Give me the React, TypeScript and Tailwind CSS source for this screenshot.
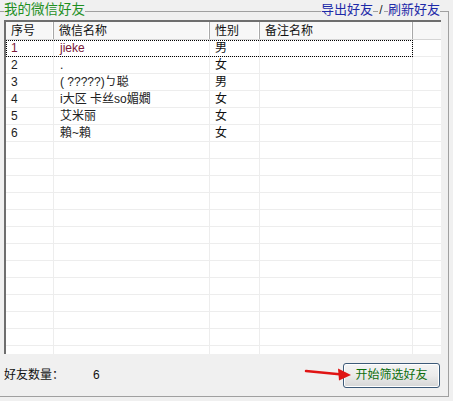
const font = '"Liberation Sans", "Noto Sans CJK SC", sans-serif'

interface Friend {
  no: string
  name: string
  sex: string
  remark: string
}

const friends: Friend[] = [
  { no: '1', name: 'jieke', sex: '男', remark: '' },
  { no: '2', name: '.', sex: '女', remark: '' },
  { no: '3', name: '( ?????)ㄅ聪', sex: '男', remark: '' },
  { no: '4', name: 'i大区 卡丝so媚嫺', sex: '女', remark: '' },
  { no: '5', name: '艾米丽', sex: '女', remark: '' },
  { no: '6', name: '賴~賴', sex: '女', remark: '' },
]

// empty rows to fill the list below the data
const blanks = Array.from({ length: 14 }, (_, i) => i)

function Row({ f, focused }: { f?: Friend; focused?: boolean }) {
  const color = focused ? 'text-[#7a1838]' : 'text-[#222]'
  return (
    <div className={`flex h-[17px] shrink-0 border-b border-[#ededed] text-[12px] leading-[16px] ${color}`}>
      <div className="relative flex">
        <div className="w-[48px] border-r border-[#ededed] pl-[5px] whitespace-nowrap">{f?.no}</div>
        <div className="w-[156px] border-r border-[#ededed] pl-[6px] whitespace-nowrap overflow-hidden">{f?.name}</div>
        <div className="w-[50px] border-r border-[#ededed] pl-[5px] text-[#111] whitespace-nowrap">{f?.sex}</div>
        <div className="w-[153px] border-r border-[#ededed] pl-[5px] whitespace-nowrap">{f?.remark}</div>
        {focused && (
          <div className="pointer-events-none absolute inset-0 -bottom-px border border-dotted border-black" />
        )}
      </div>
      <div className="flex-1" />
    </div>
  )
}

function HeadCell({ w, label }: { w: string; label?: string }) {
  return (
    <div className={`${w} flex items-center border-r border-[#a8a8a8] pl-[5px] shadow-[inset_-1px_0_0_#ffffff] whitespace-nowrap`}>
      {label}
    </div>
  )
}

export default function App() {
  return (
    <div
      className="w-[453px] h-[401px] overflow-hidden bg-[#f0f0f0] text-[#111]"
      style={{ fontFamily: font }}
    >
      <div className="w-[449px]">
        {/* group box caption line */}
        <div className="flex h-[20px] items-center">
          <div className="h-[9px] w-[4px] self-end border-t border-[#a0a0a0]" />
          <span className="text-[13.5px] leading-[20px] text-[#1f8f1f] whitespace-nowrap">我的微信好友</span>
          <div className="h-[9px] flex-1 self-end border-t border-[#a0a0a0]" />
          <span className="text-[13px] leading-[20px] text-[#1d2aa8] whitespace-nowrap">导出好友</span>
          <div className="h-[9px] w-[5px] self-end border-t border-[#a0a0a0]" />
          <span className="w-[6px] text-center text-[12px] leading-[20px] text-[#222]">/</span>
          <div className="h-[9px] w-[4px] self-end border-t border-[#a0a0a0]" />
          <span className="text-[13px] leading-[20px] text-[#1d2aa8] whitespace-nowrap">刷新好友</span>
          <div className="h-[9px] w-[9px] self-end border-t border-r border-[#a0a0a0]" />
        </div>

        <div className="flex flex-col border-r border-b border-[#a0a0a0]">
          {/* friend list */}
          <div className="ml-[4px] flex h-[334px] w-[437px] flex-col overflow-hidden border-l-2 border-t-2 border-[#6e6e6e] bg-white">
            <div className="flex h-[18px] shrink-0 border-b border-[#d5d5d5] bg-[#f7f7f7] text-[12px] text-[#111]">
              <HeadCell w="w-[48px]" label="序号" />
              <HeadCell w="w-[156px]" label="微信名称" />
              <HeadCell w="w-[50px]" label="性别" />
              <HeadCell w="w-[153px]" label="备注名称" />
              <div className="flex-1" />
            </div>
            {friends.map((f, i) => (
              <Row key={f.no} f={f} focused={i === 0} />
            ))}
            {blanks.map(b => (
              <Row key={'b' + b} />
            ))}
          </div>

          {/* footer */}
          <div className="relative flex h-[42px] items-center justify-between pl-[4px] pr-[8px]">
            <div className="flex items-center text-[12px] text-[#111]">
              <span className="w-[89px] whitespace-nowrap">好友数量：</span>
              <span>6</span>
            </div>
            <svg className="pointer-events-none absolute left-[304px] top-[11px]" width="50" height="18" viewBox="0 0 50 18">
              <line x1="2" y1="6" x2="38" y2="9.5" stroke="#e01414" strokeWidth="2.5" strokeLinecap="round" />
              <polygon points="47,10 34,3.5 35,15.5" fill="#e01414" />
            </svg>
            <button
              className="h-[25px] w-[97px] rounded-[3px] border border-[#3d5a78] bg-gradient-to-b from-[#f4f4f4] via-[#ebebeb] to-[#d6d6d6] text-[12px] text-[#0d6e0d] shadow-[inset_0_0_0_1px_#ffffff]"
              style={{ fontFamily: font }}
            >
              开始筛选好友
            </button>
          </div>
        </div>
      </div>
    </div>
  )
}
